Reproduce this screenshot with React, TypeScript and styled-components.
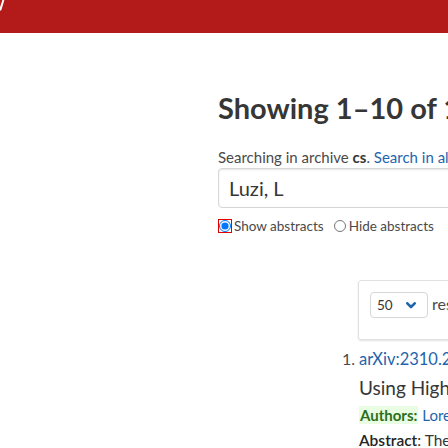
import React from "react";
import styled, { createGlobalStyle } from "styled-components";

const Global = createGlobalStyle`
  html, body {
    margin: 0;
    padding: 0;
    background: #ffffff;
    overflow: hidden;
  }
  body {
    font-family: Lato, "Segoe UI", "Open Sans", sans-serif;
    color: #4a4a4a;
  }
`;

const Page = styled.div`
  width: 1200px;
`;

const Header = styled.header`
  height: 33px;
  background: #b31b1b;
  display: flex;
  align-items: flex-start;
`;

const Main = styled.main`
  padding: 57px 0 0 218px;
  display: flex;
  flex-direction: column;
  align-items: flex-start;
`;

const Heading = styled.h1`
  margin: 0;
  font-size: 29px;
  line-height: 36px;
  font-weight: 700;
  color: #363636;
  white-space: nowrap;
`;

const SearchNote = styled.p`
  margin: 21px 0 0;
  font-size: 15px;
  line-height: 20px;
  white-space: nowrap;
  color: #4a4a4a;
  strong {
    color: #363636;
    font-weight: 700;
  }
`;

const Link = styled.a`
  color: #1f65ad;
  text-decoration: none;
`;

const QueryBox = styled.div`
  box-sizing: border-box;
  margin-top: 1px;
  height: 40px;
  width: 760px;
  border: 1px solid #d6d6d6;
  border-radius: 4px;
  box-shadow: inset 0 1px 2px rgba(10, 10, 10, 0.1);
  display: flex;
  align-items: center;
  padding-left: 10px;
  font-size: 20px;
  line-height: 24px;
  color: #363636;
`;

const RadioRow = styled.div`
  margin-top: 10px;
  height: 16px;
  display: flex;
  align-items: center;
  font-size: 13.5px;
  line-height: 16px;
  white-space: nowrap;
`;

const RadioLabel = styled.label`
  display: flex;
  align-items: center;
  gap: 3px;
  & + & {
    margin-left: 9px;
  }
`;

const Radio = styled.input<{ $focused?: boolean }>`
  width: 12px;
  height: 12px;
  margin: 0 0 0 1px;
  accent-color: #0075ff;
  outline: ${(p) => (p.$focused ? "1px solid #e00000" : "none")};
  outline-offset: 0;
`;

const OptionsBox = styled.div`
  margin: 46px 0 0 140px;
  box-sizing: border-box;
  width: 700px;
  height: 60px;
  border: 1px solid #e1e1e1;
  border-radius: 3px;
  box-shadow: 0 1px 2px rgba(10, 10, 10, 0.12);
  padding: 11px 11px 0;
  display: flex;
  align-items: flex-start;
  gap: 4px;
  white-space: nowrap;
`;

const SelectBox = styled.div`
  box-sizing: border-box;
  width: 58px;
  height: 26px;
  border: 1px solid #d6d6d6;
  border-radius: 4px;
  display: flex;
  align-items: center;
  padding: 0 11px 0 6px;
  font-size: 13.5px;
  color: #363636;
`;

const Chevron = styled.svg`
  margin-left: auto;
  display: block;
`;

const OptionsText = styled.span`
  font-size: 16px;
  line-height: 24px;
  color: #4a4a4a;
`;

const ResultItem = styled.div`
  margin: 7px 0 0 125px;
  display: grid;
  grid-template-columns: 16px auto;
  white-space: nowrap;
`;

const ItemNumber = styled.span`
  justify-self: end;
  padding-right: 4px;
  font-size: 16px;
  line-height: 24px;
  color: #4a4a4a;
`;

const ItemLink = styled(Link)`
  font-size: 16.5px;
  line-height: 24px;
`;

const ItemTitle = styled.p`
  grid-column: 2;
  margin: 4px 0 0;
  font-size: 19px;
  line-height: 26px;
  color: #363636;
`;

const ItemLine = styled.p<{ $size: number; $gap: number }>`
  grid-column: 2;
  margin: ${(p) => p.$gap}px 0 0;
  font-size: ${(p) => p.$size}px;
  line-height: 22px;
  color: #363636;
`;

const HitLabel = styled.span`
  background: #e8fde2;
  color: #2d6e1e;
  font-weight: 700;
  padding: 0 1px;
`;

const AbstractLabel = styled.span`
  font-weight: 600;
  color: #242424;
`;

export default function App() {
  return (
    <Page>
      <Global />
      <Header>
        <svg width="5" height="11" viewBox="0 0 5 11">
          <polygon points="2.4,0 4.4,0 1.2,10.5 0,10.5 0,7.2" fill="#ffffff" />
        </svg>
      </Header>
      <Main>
        <Heading>Showing 1–10 of 10 results for author: Luzi, L</Heading>
        <SearchNote>
          Searching in archive <strong>cs</strong>.{" "}
          <Link href="#">Search in all archives.</Link>
        </SearchNote>
        <QueryBox>Luzi, L</QueryBox>
        <RadioRow>
          <RadioLabel>
            <Radio type="radio" name="abs" defaultChecked $focused />
            Show abstracts
          </RadioLabel>
          <RadioLabel>
            <Radio type="radio" name="abs" />
            Hide abstracts
          </RadioLabel>
        </RadioRow>
        <OptionsBox>
          <SelectBox>
            50
            <Chevron width="10" height="7" viewBox="0 0 10 7">
              <polyline
                points="1.3,1.3 5,5 8.7,1.3"
                fill="none"
                stroke="#1f65ad"
                strokeWidth="2.6"
                strokeLinecap="round"
                strokeLinejoin="round"
              />
            </Chevron>
          </SelectBox>
          <OptionsText>results per page.</OptionsText>
        </OptionsBox>
        <ResultItem>
          <ItemNumber>1.</ItemNumber>
          <ItemLink href="#">arXiv:2310.20237</ItemLink>
          <ItemTitle>Using Higher-Order Statistics for Interpretable Models</ItemTitle>
          <ItemLine $size={15} $gap={3}>
            <HitLabel>Authors:</HitLabel> <Link href="#">Lorenzo Luzi</Link>
          </ItemLine>
          <ItemLine $size={15.5} $gap={3}>
            <AbstractLabel>Abstract</AbstractLabel>: The
          </ItemLine>
        </ResultItem>
      </Main>
    </Page>
  );
}
